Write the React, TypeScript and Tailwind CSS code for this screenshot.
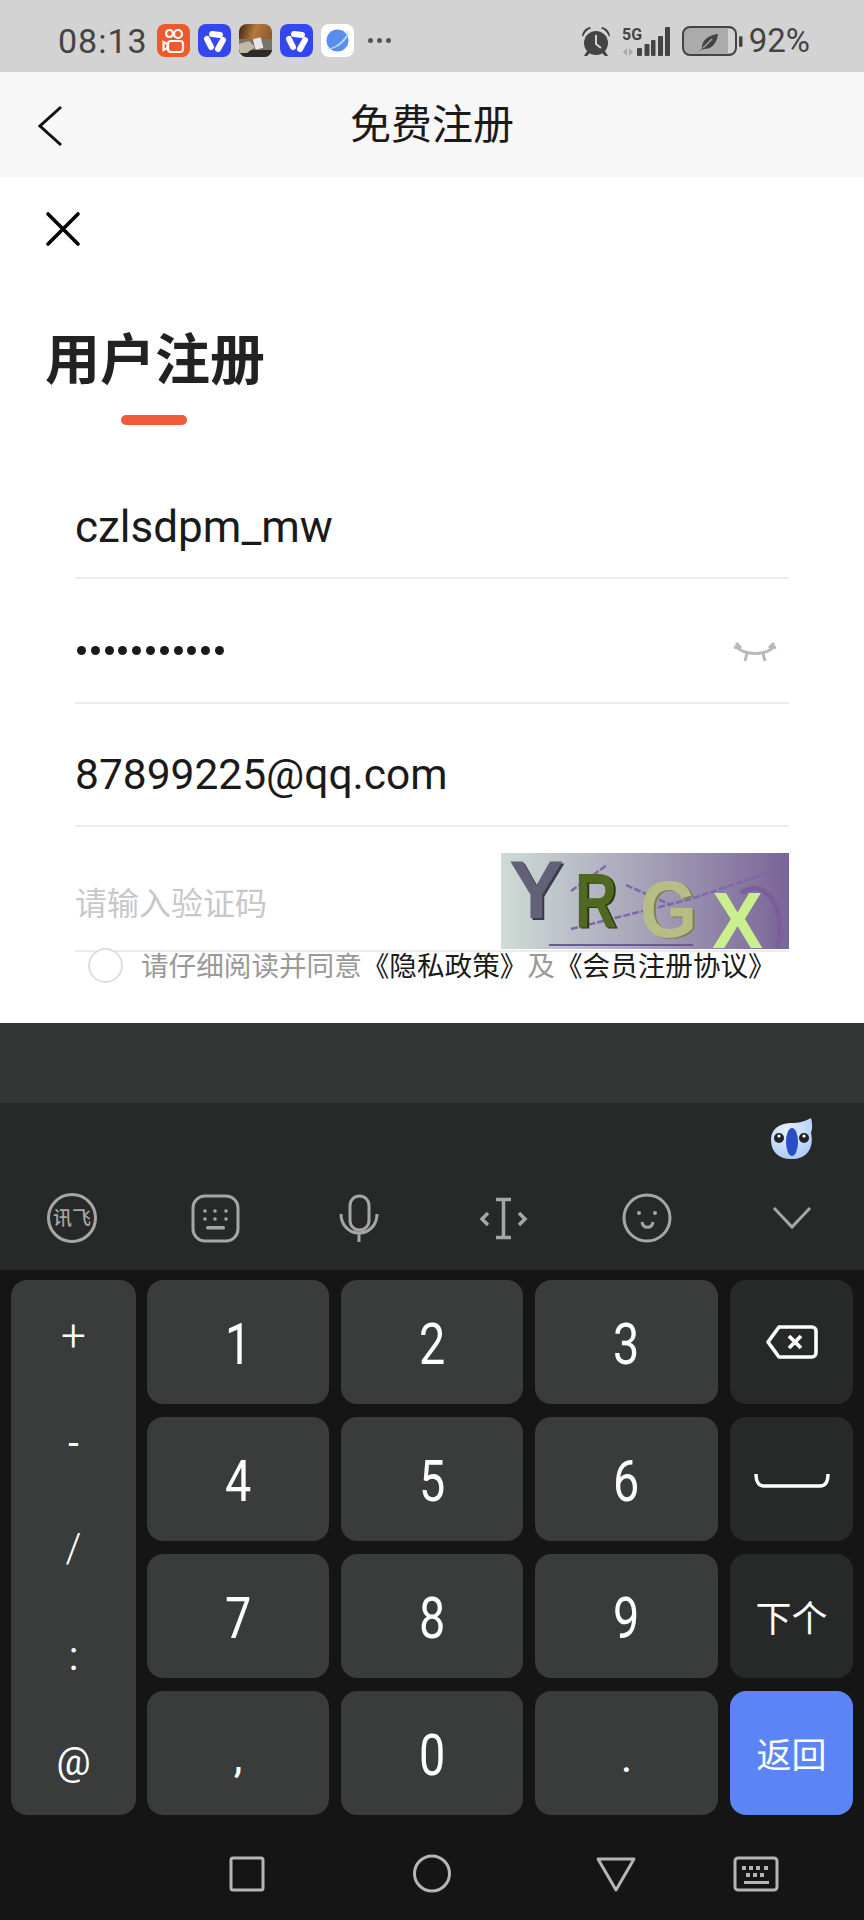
import React from "react";

const sans = "font-['Roboto','Noto_Sans_CJK_SC',sans-serif]";
const cjk = "font-['Noto_Sans_CJK_SC',sans-serif]";

function Kuaishou() {
  return (
    <svg width="33" height="33" viewBox="0 0 33 33">
      <rect width="33" height="33" rx="8" fill="#ee5a2a" />
      <g fill="none" stroke="#fff" strokeWidth="2.2">
        <circle cx="12.5" cy="9.5" r="3.5" />
        <circle cx="21" cy="10" r="4" />
        <rect x="11" y="17" width="15" height="11" rx="3" />
        <path d="M10.5 20l-4-2v8l4-2z" />
      </g>
    </svg>
  );
}
function BlueApp() {
  return (
    <svg width="33" height="33" viewBox="0 0 33 33">
      <rect width="33" height="33" rx="8" fill="#3347ee" />
      <g fill="none" stroke="#fff" strokeWidth="6" strokeLinecap="round">
        <path d="M14 10L22 11" />
        <path d="M9 15L13 23" />
        <path d="M25 16L20 25" />
      </g>
    </svg>
  );
}
function Photo() {
  return (
    <svg width="33" height="33" viewBox="0 0 33 33">
      <defs>
        <linearGradient id="ph" x1="0" y1="0" x2="1" y2="0.3">
          <stop offset="0" stopColor="#3a2512" />
          <stop offset="0.5" stopColor="#b77a3c" />
          <stop offset="1" stopColor="#8a5a30" />
        </linearGradient>
        <clipPath id="phc"><rect width="33" height="33" rx="8" /></clipPath>
      </defs>
      <g clipPath="url(#phc)">
        <rect width="33" height="33" fill="url(#ph)" />
        <rect y="15" width="33" height="18" fill="#7a7468" />
        <rect y="26" width="33" height="7" fill="#2d2a28" />
        <path d="M0 20l10-3 6 6-8 6-8 0z" fill="#c4b8a4" />
        <rect x="15" y="14" width="8" height="11" rx="1" fill="#e8e4ea" transform="rotate(-15 19 19)" />
      </g>
    </svg>
  );
}
function Planet() {
  return (
    <svg width="33" height="33" viewBox="0 0 33 33">
      <rect width="33" height="33" rx="8" fill="#fff" />
      <circle cx="16.5" cy="16.5" r="11" fill="#5b8def" />
      <path d="M5 24c5 2 16-5 21-14l2-3c-2 0-3 1-3 1l3 2c-4 10-17 18-23 14z" fill="#a9dcf6" />
    </svg>
  );
}
function StatusRight() {
  return (
    <svg width="165" height="40" viewBox="0 0 165 40" className="shrink-0">
      <g fill="#444">
        <circle cx="16" cy="22" r="12" />
        <path d="M2 15c1-6 4-8 8-9l1 1.500c-4 1-6 4-8 8z M30 15c-1-6-4-8-8-9l-1 1.500c4 1 6 4 8 8z" />
        <path d="M7 30l-3 5 3 0 3-3z M25 30l3 5-3 0-3-3z" />
      </g>
      <path d="M16 14v9l5 4" stroke="#d3d3d3" strokeWidth="2" fill="none" />
      <text x="42" y="19" fontSize="16" fontWeight="700" fill="#444" fontFamily="Roboto, sans-serif" textLength="20" lengthAdjust="spacingAndGlyphs">5G</text>
      <path d="M47 27v8l-4-4z M49 27l4 4-4 4z" fill="#aaa" />
      <g fill="#444">
        <rect x="57" y="27" width="5" height="8" rx="1" />
        <rect x="64.500" y="23" width="5" height="12" rx="1" />
        <rect x="71" y="19" width="4.500" height="16" rx="1" />
        <rect x="78" y="15" width="5" height="20" rx="1" />
        <rect x="85" y="6" width="5" height="29" rx="1" />
      </g>
      <rect x="103" y="6" width="53" height="28" rx="7" fill="#ababab" />
      <rect x="148" y="8" width="7" height="24" fill="#d3d3d3" />
      <rect x="103" y="6" width="53" height="28" rx="7" fill="none" stroke="#444" strokeWidth="2" />
      <path d="M119 30l3-2c-1-8 6-14 16-15-1 9-6 15-14 15z" fill="#444" />
      <path d="M123 27l9-9" stroke="#ababab" strokeWidth="1.200" />
      <rect x="159" y="15" width="3.500" height="11" rx="1.500" fill="#444" />
    </svg>
  );
}

function Captcha() {
  return (
    <svg width="288" height="96" viewBox="0 0 288 96" className="block">
      <defs>
        <linearGradient id="cap" x1="0" y1="0" x2="1" y2="0">
          <stop offset="0" stopColor="#cfdcd6" />
          <stop offset="0.45" stopColor="#aaa8bb" />
          <stop offset="1" stopColor="#7a6497" />
        </linearGradient>
      </defs>
      <rect width="288" height="96" fill="url(#cap)" />
      <g stroke="#7e69a8" strokeWidth="2.500" fill="none">
        <path d="M70 38L106 12" strokeDasharray="7 2" />
        <path d="M70 76L190 46 272 18" strokeDasharray="7 2" />
        <path d="M125 32L170 52" strokeDasharray="7 2" />
        <path d="M240 40C268 22 286 62 276 96" strokeWidth="5" stroke="#7a5f9c" />
        <path d="M48 92H192" strokeWidth="2" stroke="#6a5a9c" />
      </g>
      <g fontFamily="'Liberation Sans', sans-serif" fontWeight="700">
        <text x="8" y="65" fontSize="82" fill="#3a3a4a" transform="translate(2 2)">Y</text>
        <text x="8" y="65" fontSize="82" fill="#626178">Y</text>
        <text x="74" y="74" fontSize="78" fill="#2c3a12" transform="translate(2 1)" textLength="42" lengthAdjust="spacingAndGlyphs">R</text>
        <text x="74" y="74" fontSize="78" fill="#50681f" textLength="42" lengthAdjust="spacingAndGlyphs">R</text>
        <text x="139" y="84" fontSize="80" fill="#7b8450" transform="translate(2 1)" textLength="57" lengthAdjust="spacingAndGlyphs">G</text>
        <text x="139" y="84" fontSize="80" fill="#b7be85" textLength="57" lengthAdjust="spacingAndGlyphs">G</text>
        <text x="211" y="95" fontSize="80" fill="#c9f08c" textLength="51" lengthAdjust="spacingAndGlyphs">X</text>
      </g>
    </svg>
  );
}

function Key({ children, dark, blue, className = "" }: { children: React.ReactNode; dark?: boolean; blue?: boolean; className?: string }) {
  const bg = blue ? "bg-[#5b85f7]" : dark ? "bg-[#272828]" : "bg-[#3a3b3b]";
  return <div className={`${bg} rounded-[16px] flex items-center justify-center text-white ${className}`}>{children}</div>;
}

function Digit({ children }: { children: React.ReactNode }) {
  return (
    <Key className="pt-[4px]">
      <span className="inline-block text-[57px] font-normal leading-none scale-x-[0.82]">{children}</span>
    </Key>
  );
}

const toolStroke = { fill: "none", stroke: "#a6a6a6", strokeWidth: 3 } as const;

function Toolbar() {
  return (
    <div className="h-[167px] bg-[#272828] relative shrink-0">
      <svg width="46" height="42" viewBox="0 0 46 42" className="absolute left-[769px] top-[15px]">
        <defs>
          <radialGradient id="bird" cx="0.4" cy="0.3" r="0.8">
            <stop offset="0" stopColor="#e8f1ff" />
            <stop offset="1" stopColor="#a8c8f8" />
          </radialGradient>
        </defs>
        <path d="M2 22C2 10 12 5 23 5c6 0 12-1 19-5 2 8 1 12 0 15 3 12-2 25-17 26C10 42 2 34 2 22z" fill="url(#bird)" />
        <ellipse cx="23" cy="24" rx="6" ry="14" fill="#2a4fc4" />
        <circle cx="10" cy="20" r="5" fill="#222" />
        <circle cx="35" cy="20" r="5" fill="#222" />
        <circle cx="35" cy="18" r="1.600" fill="#fff" />
        <circle cx="10" cy="18" r="1.600" fill="#fff" />
      </svg>
      <div className="mt-[86px] h-[60px] absolute left-0 top-0">
        <svg width="864" height="60" viewBox="0 0 864 60" className="block">
          <circle cx="72" cy="29" r="23.500" {...toolStroke} />
          <text x="72" y="36" fontSize="19" fontWeight="500" fill="#a6a6a6" textAnchor="middle" fontFamily="'Noto Sans CJK SC', sans-serif">讯飞</text>
          <rect x="193" y="7" width="45" height="45" rx="12" {...toolStroke} />
          <g fill="#a6a6a6">
            <circle cx="205" cy="22" r="1.800" /><circle cx="215" cy="22" r="1.800" /><circle cx="226" cy="22" r="1.800" />
            <circle cx="205" cy="30" r="1.800" /><circle cx="215" cy="30" r="1.800" /><circle cx="226" cy="30" r="1.800" />
            <rect x="206" y="37" width="19" height="3.500" rx="1.500" />
          </g>
          <rect x="350" y="7" width="19" height="34" rx="9.500" {...toolStroke} />
          <path d="M341 25c0 11 8 19 18 19s18-8 18-19M359 44v9" {...toolStroke} />
          <path d="M496 10.500h15M503.500 10.500v38M496 48.500h15" {...toolStroke} strokeWidth="3.500" />
          <path d="M488 24l-6 6 6 6M519 24l6 6-6 6" {...toolStroke} strokeWidth="3.500" />
          <circle cx="647" cy="29" r="23" {...toolStroke} />
          <circle cx="639" cy="24" r="2" fill="#a6a6a6" />
          <circle cx="655" cy="24" r="2" fill="#a6a6a6" />
          <path d="M642 33c1 7 10 7 11 0" {...toolStroke} />
          <path d="M774 19l18 19 18-19" {...toolStroke} />
        </svg>
      </div>
    </div>
  );
}

export default function App() {
  return (
    <div className={`w-[864px] h-[1920px] flex flex-col bg-white overflow-hidden ${sans}`}>
      {/* status */}
      <div className="h-[72px] bg-[#d3d3d3] flex items-center pl-[58px] pt-[9px] pr-[54px] shrink-0">
        <span className="text-[34px] text-[#444] w-[99px] tracking-[1px] leading-none">08:13</span>
        <div className="flex gap-[8px] items-center">
          <Kuaishou />
          <BlueApp />
          <Photo />
          <BlueApp />
          <Planet />
        </div>
        <div className="flex gap-[4px] ml-[14px]">
          <span className="w-[5px] h-[5px] rounded-full bg-[#555]" />
          <span className="w-[5px] h-[5px] rounded-full bg-[#555]" />
          <span className="w-[5px] h-[5px] rounded-full bg-[#555]" />
        </div>
        <div className="ml-auto flex items-center gap-[4px]">
          <StatusRight />
          <span className="text-[33px] text-[#444] leading-none">92%</span>
        </div>
      </div>
      {/* nav */}
      <div className="h-[105px] bg-[#f7f7f7] relative flex items-center justify-center shrink-0 pb-[6px]">
        <svg width="26" height="42" viewBox="0 0 26 42" className="absolute left-[37px] top-[33px]">
          <path d="M24 2L3 21l21 19" fill="none" stroke="#111" strokeWidth="3" />
        </svg>
        <span className={`text-[41px] text-[#1a1a1a] leading-none ${cjk}`}>免费注册</span>
      </div>
      {/* form */}
      <div className="h-[846px] shrink-0 flex flex-col">
        <div className="pl-[45px] pt-[34px]">
          <svg width="36" height="36" viewBox="0 0 36 36" className="block">
            <path d="M3 3l30 30M33 3L3 33" stroke="#000" strokeWidth="3.600" strokeLinecap="round" fill="none" />
          </svg>
        </div>
        <div className={`pl-[45px] mt-[81px] text-[55px] font-bold text-[#222] leading-none ${cjk}`}>用户注册</div>
        <div className="ml-[121px] mt-[32px] w-[66px] h-[10px] rounded-full bg-[#ee5a3a]" />
        <div className="mx-[75px] w-[714px] mt-[34px]">
          <div className="h-[120px] border-b-2 border-[#ececec] flex items-center text-[44px] text-[#1a1a1a] pt-[18px]">czlsdpm_mw</div>
          <div className="h-[125px] border-b-2 border-[#ececec] flex items-center justify-between text-[#1a1a1a]">
            <div className="flex gap-[4.800px] items-center mt-[20px] ml-[2px]">
              {Array.from({ length: 11 }).map((_, i) => (
                <span key={i} className="w-[9px] h-[9px] rounded-full bg-[#1a1a1a]" />
              ))}
            </div>
            <svg width="44" height="24" viewBox="0 0 44 24" className="mr-[12px] mt-[22px]">
              <path d="M2 6c10 10 30 10 40 0M3 3l5 5M41 3l-5 5M14 13l-2 8M30 13l2 8M5 8l-4-1M39 8l4-1" fill="none" stroke="#b9b9b9" strokeWidth="3" />
            </svg>
          </div>
          <div className="h-[123px] border-b-2 border-[#ececec] flex items-center text-[42.500px] text-[#1a1a1a] pt-[20px]">87899225@qq.com</div>
          <div className={`h-[125px] border-b-2 border-[#ececec] flex items-center justify-between text-[32px] text-[#c8c8c8] ${cjk}`}>
            <span className="pt-[24px]">请输入验证码</span>
            <div className="self-end mb-[1px]"><Captcha /></div>
          </div>
        </div>
        <div className="ml-[88px] -mt-[4px] relative flex items-center">
          <span className="w-[35px] h-[35px] rounded-full border-2 border-[#dedede] bg-white" />
          <span className={`ml-[18px] pb-[2px] text-[27.600px] text-[#999] whitespace-nowrap leading-none ${cjk}`}>
            请仔细阅读并同意<span className="text-[#1a1a1a]">《隐私政策》</span>及<span className="text-[#1a1a1a]">《会员注册协议》</span>
          </span>
        </div>
      </div>
      {/* keyboard */}
      <div className="h-[80px] bg-[#333434] shrink-0" />
      <Toolbar />
      <div className="flex-1 bg-[#151515] flex flex-col">
        <div className="h-[544px] pt-[10px] pl-[11px] flex gap-[11px] shrink-0">
          <div className="w-[125px] h-[535px] shrink-0 pt-[3px] bg-[#3a3b3b] rounded-[16px] flex flex-col items-center text-white">
            <span className="h-[107px] flex items-center leading-none text-[44px] font-light">+</span>
            <span className="h-[107px] flex items-center leading-none text-[38px]">-</span>
            <span className="h-[107px] flex items-center leading-none text-[40px] font-light">/</span>
            <span className="h-[107px] flex items-center leading-none text-[40px] pt-[4px]">:</span>
            <span className="h-[107px] flex items-center leading-none text-[38px]">@</span>
          </div>
          <div className="grid grid-cols-[182px_182px_183px_123px] grid-rows-[124px_124px_124px_124px] gap-x-[12px] gap-y-[13px] shrink-0">
            <Digit>1</Digit>
            <Digit>2</Digit>
            <Digit>3</Digit>
            <Key dark>
              <svg width="54" height="36" viewBox="0 0 54 36">
                <path d="M14 3h33a4 4 0 0 1 4 4v22a4 4 0 0 1-4 4H14L3 18z" fill="none" stroke="#fff" strokeWidth="3.600" strokeLinejoin="round" />
                <path d="M24 12l12 12M36 12L24 24" stroke="#fff" strokeWidth="3.800" />
              </svg>
            </Key>
            <Digit>4</Digit>
            <Digit>5</Digit>
            <Digit>6</Digit>
            <Key dark className="pt-[6px]">
              <svg width="76" height="20" viewBox="0 0 76 20">
                <path d="M2 2c0 8 3 12 8 12h56c5 0 8-4 8-12" fill="none" stroke="#fff" strokeWidth="3.400" />
              </svg>
            </Key>
            <Digit>7</Digit>
            <Digit>8</Digit>
            <Digit>9</Digit>
            <Key dark className={`text-[36px] ${cjk}`}>下个</Key>
            <Key className="text-[44px] pt-[8px]">,</Key>
            <Digit>0</Digit>
            <Key className="text-[44px] pt-[8px]">.</Key>
            <Key blue className={`text-[35px] ${cjk}`}>返回</Key>
          </div>
        </div>
        <div className="h-[106px] relative">
          <svg width="864" height="60" viewBox="0 0 864 60" className="absolute left-0 top-[30px]">
            <rect x="231" y="14" width="32" height="32" rx="2" fill="none" stroke="#b5b5b5" strokeWidth="3" />
            <circle cx="432" cy="29.500" r="17.500" fill="none" stroke="#b5b5b5" strokeWidth="3" />
            <path d="M598 15h36l-18 31z" fill="none" stroke="#b5b5b5" strokeWidth="3" strokeLinejoin="round" />
            <rect x="735" y="14" width="42" height="32" rx="3" fill="none" stroke="#b5b5b5" strokeWidth="3" />
            <g fill="#b5b5b5">
              <rect x="742" y="22" width="4" height="4" /><rect x="749" y="22" width="4" height="4" /><rect x="756" y="22" width="4" height="4" /><rect x="764" y="22" width="4" height="4" />
              <rect x="746" y="29" width="4" height="4" /><rect x="753" y="29" width="4" height="4" /><rect x="760" y="29" width="4" height="4" />
              <rect x="744" y="37" width="25" height="3" />
            </g>
          </svg>
        </div>
      </div>
    </div>
  );
}
